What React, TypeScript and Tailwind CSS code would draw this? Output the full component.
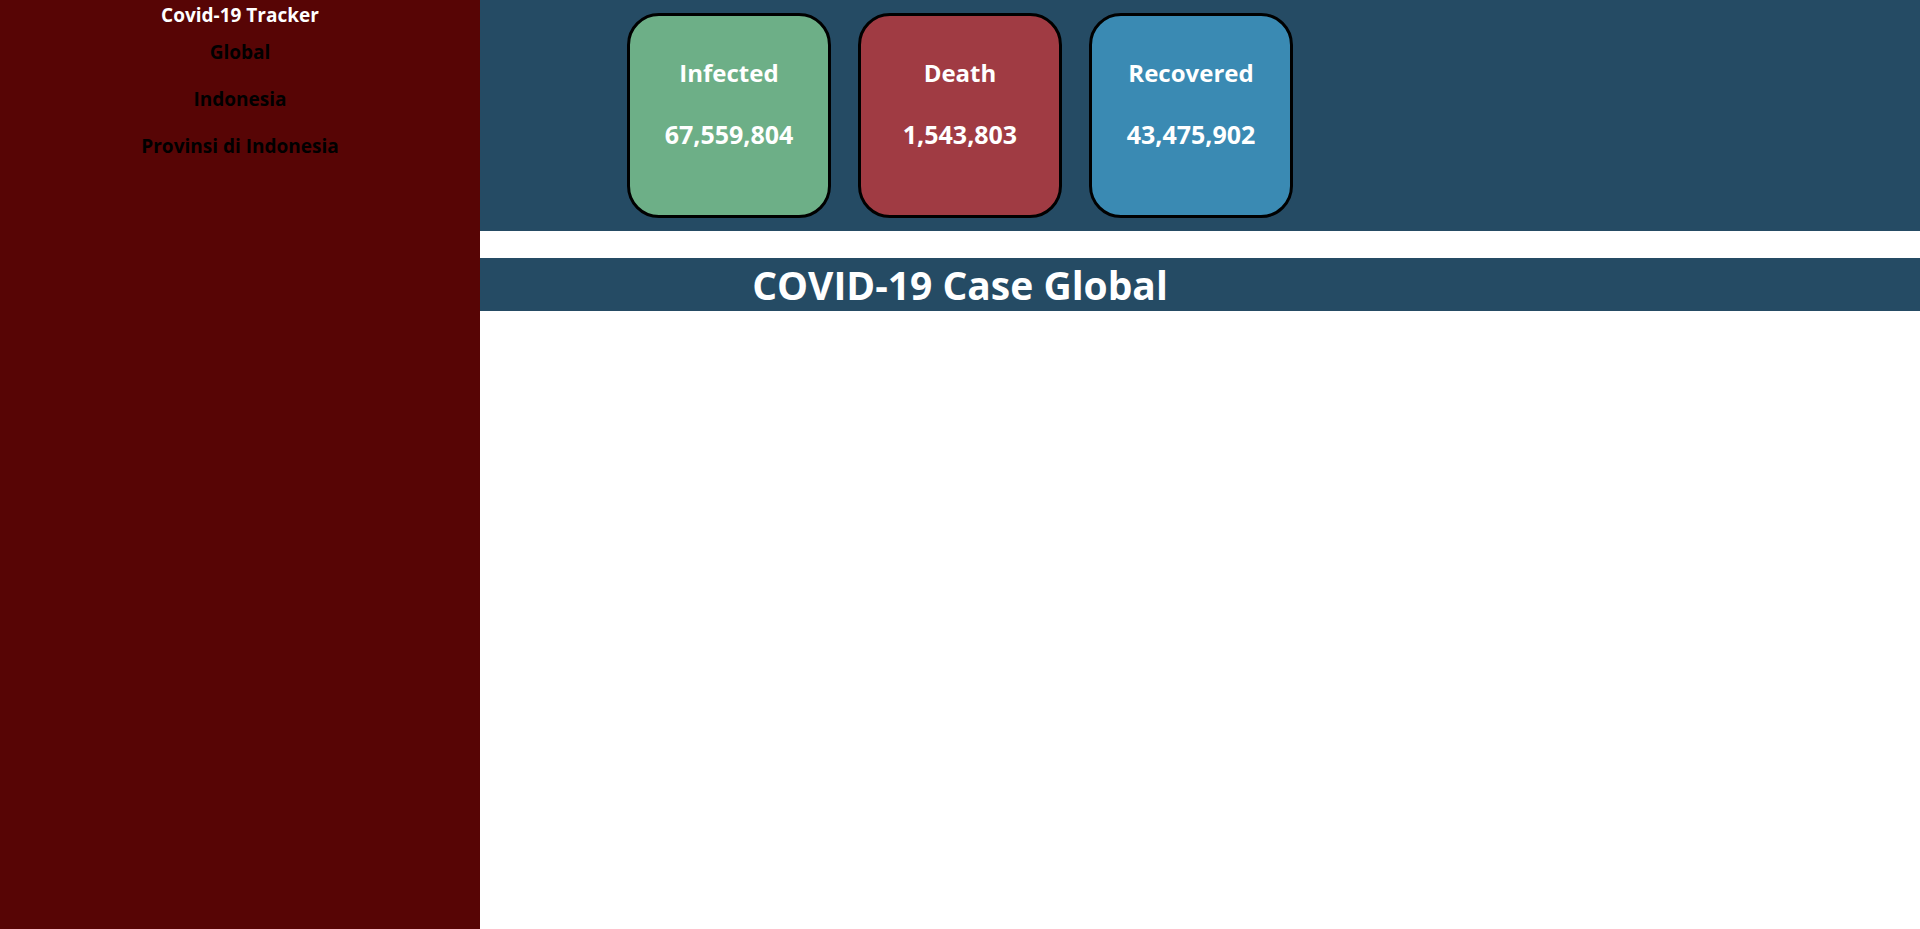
const stats = [
  { label: 'Infected', value: '67,559,804', bg: 'bg-[#6daf87]' },
  { label: 'Death', value: '1,543,803', bg: 'bg-[#a03b43]' },
  { label: 'Recovered', value: '43,475,902', bg: 'bg-[#3a8ab3]' },
]

const links = ['Global', 'Indonesia', 'Provinsi di Indonesia']

export default function App() {
  return (
    <div className="flex min-h-[929px] w-full font-['Open_Sans',sans-serif]">
      {/* Sidebar */}
      <aside className="w-[480px] shrink-0 bg-[#570505] text-center">
        <h1 className="pt-[3px] text-[19px] font-bold leading-[24px] text-white">Covid-19 Tracker</h1>
        <nav className="mt-[13px] flex flex-col gap-[23px]">
          {links.map((l) => (
            <a key={l} href="#" className="text-[19px] font-bold leading-[24px] text-black">
              {l}
            </a>
          ))}
        </nav>
      </aside>

      {/* Main */}
      <main className="flex-1 bg-white">
        <header className="h-[231px] bg-[#254b64]">
          <div className="flex w-[960px] justify-center gap-[27px] pt-[13px]">
            {stats.map((s) => (
              <div
                key={s.label}
                className={`flex h-[205px] w-[204px] flex-col items-center rounded-[32px] border-[3px] border-black pt-[41px] text-white ${s.bg}`}
              >
                <h3 className="text-[24px] font-bold leading-[32px]">{s.label}</h3>
                <p className="mt-[29px] text-[25px] font-bold leading-[32px]">{s.value}</p>
              </div>
            ))}
          </div>
        </header>

        <div className="mt-[27px] h-[53px] bg-[#254b64]">
          <h2 className="w-[960px] text-center text-[39px] font-bold leading-[53px] text-white">COVID-19 Case Global</h2>
        </div>
      </main>
    </div>
  )
}
